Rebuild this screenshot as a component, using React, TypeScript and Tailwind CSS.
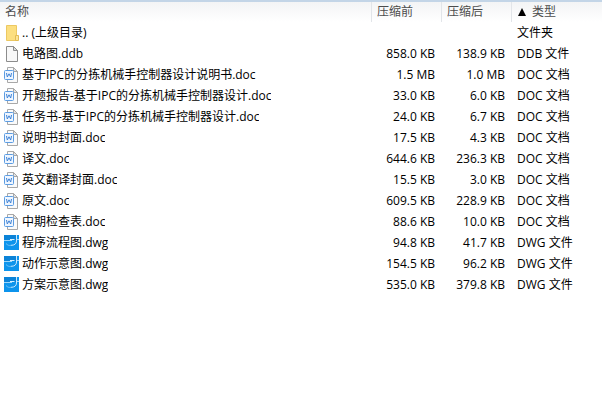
type Kind = 'folder' | 'file' | 'doc' | 'dwg';

interface Entry {
  kind: Kind;
  name: string;
  size?: string;
  packed?: string;
  type: string;
}

const entries: Entry[] = [
  { kind: 'folder', name: '.. (上级目录)', type: '文件夹' },
  { kind: 'file', name: '电路图.ddb', size: '858.0 KB', packed: '138.9 KB', type: 'DDB 文件' },
  { kind: 'doc', name: '基于IPC的分拣机械手控制器设计说明书.doc', size: '1.5 MB', packed: '1.0 MB', type: 'DOC 文档' },
  { kind: 'doc', name: '开题报告-基于IPC的分拣机械手控制器设计.doc', size: '33.0 KB', packed: '6.0 KB', type: 'DOC 文档' },
  { kind: 'doc', name: '任务书-基于IPC的分拣机械手控制器设计.doc', size: '24.0 KB', packed: '6.7 KB', type: 'DOC 文档' },
  { kind: 'doc', name: '说明书封面.doc', size: '17.5 KB', packed: '4.3 KB', type: 'DOC 文档' },
  { kind: 'doc', name: '译文.doc', size: '644.6 KB', packed: '236.3 KB', type: 'DOC 文档' },
  { kind: 'doc', name: '英文翻译封面.doc', size: '15.5 KB', packed: '3.0 KB', type: 'DOC 文档' },
  { kind: 'doc', name: '原文.doc', size: '609.5 KB', packed: '228.9 KB', type: 'DOC 文档' },
  { kind: 'doc', name: '中期检查表.doc', size: '88.6 KB', packed: '10.0 KB', type: 'DOC 文档' },
  { kind: 'dwg', name: '程序流程图.dwg', size: '94.8 KB', packed: '41.7 KB', type: 'DWG 文件' },
  { kind: 'dwg', name: '动作示意图.dwg', size: '154.5 KB', packed: '96.2 KB', type: 'DWG 文件' },
  { kind: 'dwg', name: '方案示意图.dwg', size: '535.0 KB', packed: '379.8 KB', type: 'DWG 文件' },
];

function EntryIcon({ kind }: { kind: Kind }) {
  return (
    <svg viewBox="0 0 16 16" className="h-4 w-4 shrink-0" aria-hidden="true">
      {kind === 'folder' && (
        <>
          <path d="M2.5.5h10v15h-10z" fill="#fcdf80" stroke="#ecc862" />
          <path d="M11.5 10.5h3v5h-3z" fill="#fde596" stroke="#e3bc55" />
        </>
      )}
      {kind === 'file' && (
        <>
          <path d="M2.5.5h7l4 4v11h-11z" fill="#f8f8f8" stroke="#8c8c8c" />
          <path d="M9.5.5v4h4z" fill="#dcdcdc" stroke="#8c8c8c" />
        </>
      )}
      {kind === 'doc' && (
        <>
          <path d="M3.5.5h6l4 4v11h-10z" fill="#fafafa" stroke="#a8a8a8" />
          <path d="M9.5.5v4h4z" fill="#e4e4e4" stroke="#a8a8a8" />
          <rect x=".5" y="3.5" width="9" height="9" rx="1" fill="#eff6ff" stroke="#5c9ce2" />
          <path d="M2.5 6l.8 4L5 6.8 6.7 10l.8-4" fill="none" stroke="#3f83d6" />
        </>
      )}
      {kind === 'dwg' && (
        <>
          <path d="M0 0h15v15H0z" fill="#0d94ec" />
          <path d="M0 0h12v5H0z" fill="#0b83d8" />
          <path d="M0 5.5h8M12 4.5h3" stroke="#9ad6fb" />
          <path d="M12.5 0v6c0 2.8-2 4.3-5.5 4.3" fill="none" stroke="#c9eaff" />
          <path d="M6 4.5h4.5" stroke="#d8f0ff" />
          <path d="M2 8.5c1.5 1.8 3.2 2.2 5 1.8" fill="none" stroke="#6cc0f6" />
        </>
      )}
    </svg>
  );
}

const headCell = 'border-r border-[#e2e5e9] p-0 font-normal';
const headButton = 'block h-5 w-full truncate px-[5px] text-left';

export default function App() {
  return (
    <main className="min-h-screen border-t-2 border-[#c3d5e7] bg-white font-['Open_Sans','Noto_Sans_CJK_SC',sans-serif] text-xs text-black">
      <table className="w-full table-fixed border-separate border-spacing-0">
        <colgroup>
          <col />
          <col className="w-[70px]" />
          <col className="w-[70px]" />
          <col className="w-[90px]" />
        </colgroup>
        <thead className="bg-linear-to-b from-[#f3f4f5] to-white text-[#4c4c4c]">
          <tr>
            <th className={headCell}>
              <button type="button" className={headButton}>名称</button>
            </th>
            <th className={headCell}>
              <button type="button" className={headButton}>压缩前</button>
            </th>
            <th className={headCell}>
              <button type="button" className={headButton}>压缩后</button>
            </th>
            <th className="p-0 font-normal" aria-sort="ascending">
              <button type="button" className="flex h-5 w-full items-center gap-[5px] px-[5px]">
                <svg viewBox="0 0 10 10" className="h-2.5 w-2.5" aria-hidden="true">
                  <path d="M5 1l4 8H1z" fill="#000" />
                </svg>
                <span>类型</span>
              </button>
            </th>
          </tr>
        </thead>
        <tbody>
          {entries.map((entry) => (
            <tr key={entry.name} className="h-[21px] whitespace-nowrap">
              <td className="p-0 pl-1">
                <div className="flex items-center gap-0.5">
                  <EntryIcon kind={entry.kind} />
                  <span className="truncate">{entry.name}</span>
                </div>
              </td>
              <td className="p-0 pr-[7px] text-right">{entry.size}</td>
              <td className="p-0 pr-[7px] text-right">{entry.packed}</td>
              <td className="p-0 pl-[5px]">{entry.type}</td>
            </tr>
          ))}
        </tbody>
      </table>
    </main>
  );
}
